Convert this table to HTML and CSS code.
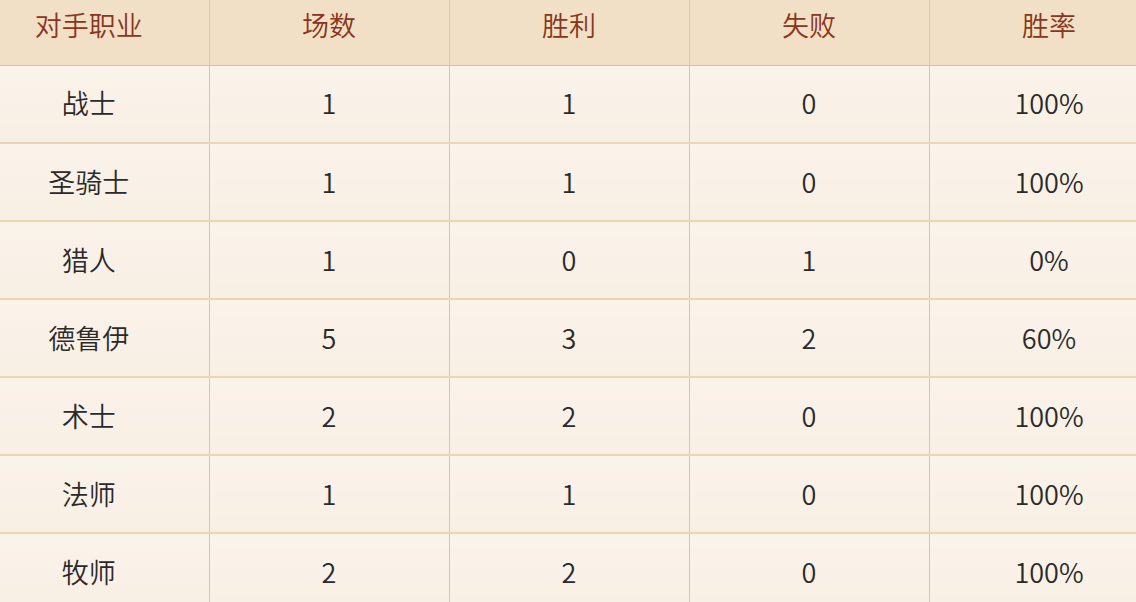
FILE: index.html
```html
<!DOCTYPE html>
<html lang="zh-CN">
<head>
<meta charset="utf-8">
<link rel="stylesheet" href="styles.css">
</head>
<body>
<div class="wrap">
<table class="stats">
<thead>
<tr><th>对手职业</th><th>场数</th><th>胜利</th><th>失败</th><th>胜率</th></tr>
</thead>
<tbody>
<tr><td>战士</td><td>1</td><td>1</td><td>0</td><td>100%</td></tr>
<tr><td>圣骑士</td><td>1</td><td>1</td><td>0</td><td>100%</td></tr>
<tr><td>猎人</td><td>1</td><td>0</td><td>1</td><td>0%</td></tr>
<tr><td>德鲁伊</td><td>5</td><td>3</td><td>2</td><td>60%</td></tr>
<tr><td>术士</td><td>2</td><td>2</td><td>0</td><td>100%</td></tr>
<tr><td>法师</td><td>1</td><td>1</td><td>0</td><td>100%</td></tr>
<tr><td>牧师</td><td>2</td><td>2</td><td>0</td><td>100%</td></tr>
</tbody>
</table>
</div>
</body>
</html>
```
FILE: styles.css
```css
html, body {
  margin: 0;
  padding: 0;
  background: #f9f1e7;
  overflow: hidden;
}
.wrap {
  width: 1136px;
  height: 602px;
  overflow: hidden;
}
.stats {
  margin: -13px 0 0 -31px;
  border-collapse: collapse;
  table-layout: fixed;
  width: 1200px;
  font-family: "Noto Sans CJK SC", "Noto Sans", sans-serif;
  font-size: 27px;
  font-weight: 350;
}
.stats th,
.stats td {
  width: 240px;
  height: 78px;
  padding: 0 0 2px 0;
  box-sizing: border-box;
  text-align: center;
  vertical-align: middle;
  border-right: 1px solid #dcc6a4;
  border-bottom: 2px solid #ecd6b0;
}
.stats th {
  background: #f1e0c5;
  color: #8a3520;
  font-weight: 350;
  border-bottom: 1px solid #d8c09a;
}
.stats td {
  background: linear-gradient(#faf3ea, #f8efe4);
  color: #2a2a2a;
}
```
